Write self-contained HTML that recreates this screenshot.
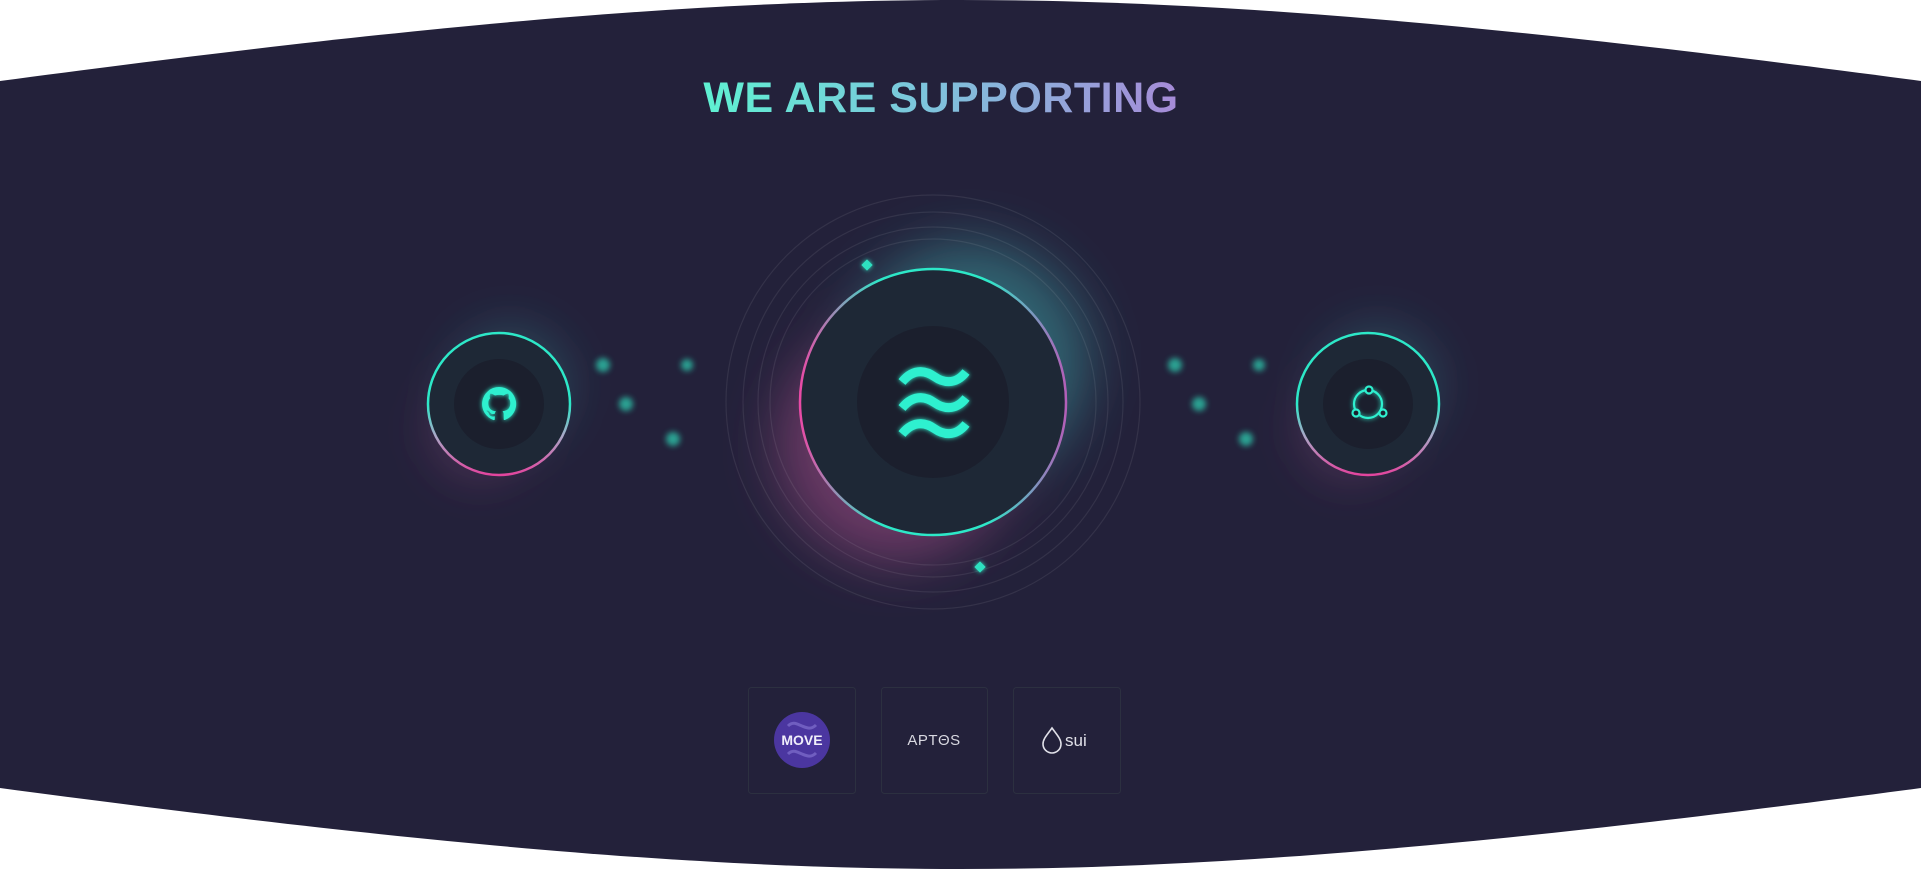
<!DOCTYPE html>
<html><head><meta charset="utf-8"><style>
html,body{margin:0;padding:0;background:#fff;width:1921px;height:871px;overflow:hidden}
svg{display:block}
.t{font-family:"Liberation Sans",sans-serif;font-weight:700}
</style></head><body>
<svg width="1921" height="871" viewBox="0 0 1921 871" xmlns="http://www.w3.org/2000/svg">
<defs>
<linearGradient id="tg" x1="700" y1="0" x2="1183" y2="0" gradientUnits="userSpaceOnUse">
<stop offset="0" stop-color="#5ef2d2"/><stop offset="0.45" stop-color="#7cc6dc"/><stop offset="1" stop-color="#a78ad8"/></linearGradient>
<linearGradient id="ring" x1="0" y1="0" x2="0" y2="1">
<stop offset="0" stop-color="#2de8c8"/><stop offset="0.5" stop-color="#2de8c8"/><stop offset="0.72" stop-color="#a9a9c8"/><stop offset="1" stop-color="#e2459e"/></linearGradient>
<linearGradient id="ringM" x1="0" y1="0" x2="1" y2="0">
<stop offset="0" stop-color="#e94aa6"/><stop offset="0.3" stop-color="#2de8c8"/><stop offset="0.7" stop-color="#2de8c8"/><stop offset="1" stop-color="#b35fb8"/></linearGradient>
<radialGradient id="glowT" cx="0.5" cy="0.5" r="0.5"><stop offset="0.6" stop-color="#3ea6a8" stop-opacity="0.5"/><stop offset="1" stop-color="#3ea6a8" stop-opacity="0"/></radialGradient>
<radialGradient id="glowP" cx="0.5" cy="0.5" r="0.5"><stop offset="0.6" stop-color="#b0508f" stop-opacity="0.5"/><stop offset="1" stop-color="#b0508f" stop-opacity="0"/></radialGradient>
<filter id="blur" x="-50%" y="-50%" width="200%" height="200%"><feGaussianBlur stdDeviation="20"/></filter>
<filter id="b4" x="-100%" y="-100%" width="300%" height="300%"><feGaussianBlur stdDeviation="3"/></filter>
<filter id="gl" x="-50%" y="-50%" width="200%" height="200%"><feGaussianBlur stdDeviation="2.5" result="b"/><feMerge><feMergeNode in="b"/><feMergeNode in="SourceGraphic"/></feMerge></filter>
</defs>
<path d="M0,81 C420,25 700,0 960,0 C1220,0 1500,25 1921,81 L1921,788 C1500,844 1220,869 960,869 C700,869 420,844 0,788 Z" fill="#23213a"/>
<text x="941" y="112" text-anchor="middle" class="t" font-size="43" letter-spacing="0.5" fill="url(#tg)">WE ARE SUPPORTING</text>

<g filter="url(#blur)">
<circle cx="970" cy="360" r="145" fill="url(#glowT)"/>
<circle cx="895" cy="445" r="145" fill="url(#glowP)"/>
</g>
<g fill="none" stroke="#ffffff" stroke-opacity="0.08" stroke-width="1.2">
<circle cx="933" cy="402" r="207"/><circle cx="933" cy="402" r="190"/><circle cx="933" cy="402" r="175"/><circle cx="933" cy="402" r="163"/>
</g>
<circle cx="933" cy="402" r="133" fill="#1e2836" stroke="url(#ringM)" stroke-width="2.5"/>
<circle cx="933" cy="402" r="76" fill="#1b1f2d"/>
<g fill="none" stroke="#2ff0cf" stroke-width="9" stroke-linecap="butt" filter="url(#gl)">
<path d="M902,382 C915,366 928,372 935,377 C942,382 955,386 966,372"/>
<path d="M902,408 C915,392 928,398 935,403 C942,408 955,412 966,398"/>
<path d="M902,434 C915,418 928,424 935,429 C942,434 955,438 966,424"/>
</g>
<g fill="#2fe0c0" filter="url(#gl)">
<rect x="863" y="261" width="8" height="8" transform="rotate(45 867 265)"/>
<rect x="976" y="563" width="8" height="8" transform="rotate(45 980 567)"/>
</g>

<g filter="url(#blur)"><circle cx="510" cy="385" r="75" fill="url(#glowT)" opacity="0.5"/><circle cx="480" cy="430" r="65" fill="url(#glowP)" opacity="0.45"/></g>
<circle cx="499" cy="404" r="71" fill="#1e2836" stroke="url(#ring)" stroke-width="2.5"/>
<circle cx="499" cy="404" r="45" fill="#1b1f2d"/>
<g filter="url(#gl)" fill="#2ff0cf">
<path d="M499,387 a17,17 0 0 0 -5.4,33.1 c0.9,0.2 1.2,-0.4 1.2,-0.8 v-3 c-4.7,1 -5.7,-2.3 -5.7,-2.3 c-0.8,-2 -1.9,-2.5 -1.9,-2.5 c-1.5,-1 0.1,-1 0.1,-1 c1.7,0.1 2.6,1.7 2.6,1.7 c1.5,2.6 4,1.9 5,1.4 c0.2,-1.1 0.6,-1.9 1.1,-2.3 c-3.8,-0.4 -7.7,-1.9 -7.7,-8.4 c0,-1.9 0.7,-3.4 1.8,-4.6 c-0.2,-0.4 -0.8,-2.2 0.2,-4.5 c0,0 1.4,-0.5 4.7,1.7 a16,16 0 0 1 8.6,0 c3.3,-2.2 4.7,-1.7 4.7,-1.7 c0.9,2.3 0.3,4.1 0.2,4.5 c1.1,1.2 1.8,2.7 1.8,4.6 c0,6.5 -4,7.9 -7.8,8.4 c0.6,0.5 1.2,1.6 1.2,3.2 v4.7 c0,0.5 0.3,1 1.2,0.8 A17,17 0 0 0 499,387 z"/>
</g>

<g filter="url(#blur)"><circle cx="1378" cy="385" r="75" fill="url(#glowT)" opacity="0.5"/><circle cx="1350" cy="430" r="65" fill="url(#glowP)" opacity="0.45"/></g>
<circle cx="1368" cy="404" r="71" fill="#1e2836" stroke="url(#ring)" stroke-width="2.5"/>
<circle cx="1368" cy="404" r="45" fill="#1b1f2d"/>
<g fill="none" stroke="#2ff0cf" stroke-width="2.2" filter="url(#gl)">
<circle cx="1368" cy="404" r="14"/>
</g>
<g fill="#1b1f2d" stroke="#2ff0cf" stroke-width="2.2">
<circle cx="1369" cy="390" r="3.5"/><circle cx="1356" cy="413" r="3.5"/><circle cx="1383" cy="413" r="3.5"/>
</g>
<g fill="#2fd8b8" opacity="0.7" filter="url(#b4)">
<circle cx="603" cy="365" r="7"/><circle cx="687" cy="365" r="6"/><circle cx="626" cy="404" r="7"/><circle cx="673" cy="439" r="7"/>
<circle cx="1175" cy="365" r="7"/><circle cx="1259" cy="365" r="6"/><circle cx="1199" cy="404" r="7"/><circle cx="1246" cy="439" r="7"/>
</g>

<g fill="none" stroke="#2c3040" stroke-width="1">
<rect x="748.5" y="687.5" width="107" height="106" rx="3"/>
<rect x="881.5" y="687.5" width="106" height="106" rx="3"/>
<rect x="1013.5" y="687.5" width="107" height="106" rx="3"/>
</g>
<circle cx="802" cy="740" r="28" fill="#4b36a0"/>
<g fill="none" stroke="#7a68c8" stroke-width="3" opacity="0.8">
<path d="M788,726 c5,-5 9,-2 14,0 c5,2 9,4 14,-1"/>
<path d="M788,754 c5,-5 9,-2 14,0 c5,2 9,4 14,-1"/>
</g>
<text x="802" y="745" text-anchor="middle" class="t" font-size="14" fill="#f0eefa">MOVE</text>
<text x="934" y="745" text-anchor="middle" font-family="Liberation Sans,sans-serif" font-size="15" fill="#d8d8e0" letter-spacing="0.5">APTΘS</text>
<path d="M1052,728 c-5,7 -9,11 -9,16 a9,9 0 0 0 18,0 c0,-5 -4,-9 -9,-16 z" fill="none" stroke="#e0e0e8" stroke-width="1.6"/>
<text x="1065" y="746" font-family="Liberation Sans,sans-serif" font-size="17" fill="#e0e0e8">sui</text>
</svg>
</body></html>
